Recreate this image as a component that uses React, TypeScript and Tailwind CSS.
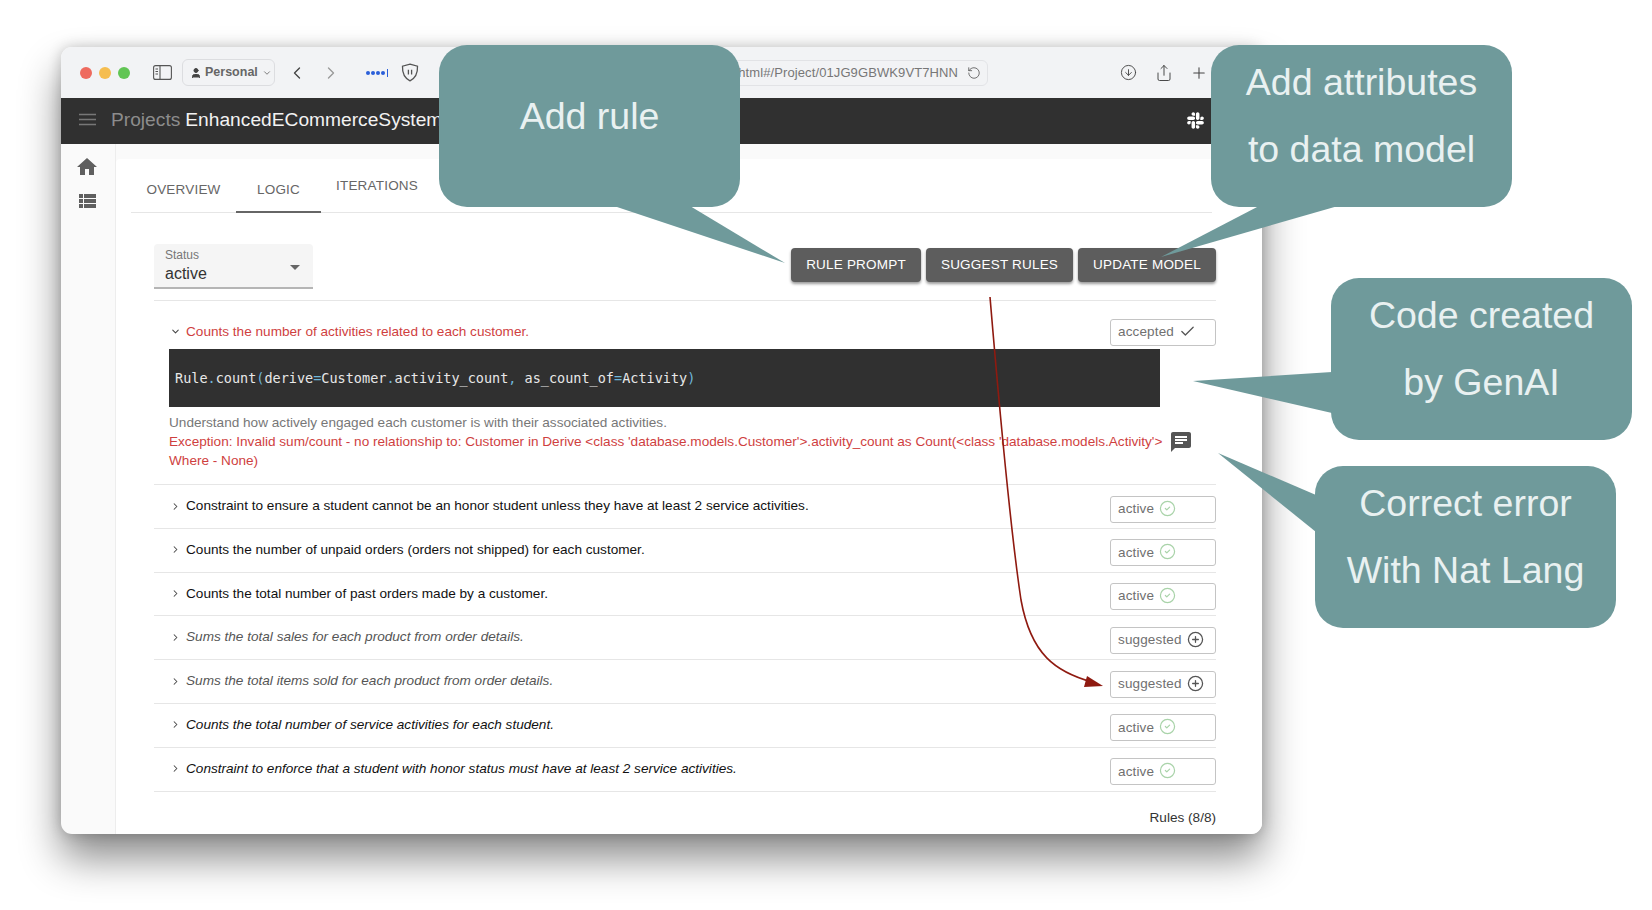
import React from 'react';
import { ChevronDown, ChevronRight, ChevronLeft, Check, CircleCheck, CirclePlus, CircleArrowDown, Share, Plus, RotateCw, User } from 'lucide-react';
import { FaSlack } from 'react-icons/fa';

const rules = [
  { text: 'Constraint to ensure a student cannot be an honor student unless they have at least 2 service activities.', status: 'active', style: 'text-[#111]' },
  { text: 'Counts the number of unpaid orders (orders not shipped) for each customer.', status: 'active', style: 'text-[#111]' },
  { text: 'Counts the total number of past orders made by a customer.', status: 'active', style: 'text-[#111]' },
  { text: 'Sums the total sales for each product from order details.', status: 'suggested', style: 'italic text-[#555]' },
  { text: 'Sums the total items sold for each product from order details.', status: 'suggested', style: 'italic text-[#555]' },
  { text: 'Counts the total number of service activities for each student.', status: 'active', style: 'italic text-[#111]' },
  { text: 'Constraint to enforce that a student with honor status must have at least 2 service activities.', status: 'active', style: 'italic text-[#111]' },
];

const StatusChip = ({ status }: { status: string }) => (
  <div className="flex h-[27px] w-[106px] shrink-0 items-center gap-[5px] rounded-[3px] border border-[#c4c4c4] bg-white pl-[7px] text-[13.5px] text-[#707070]">
    <span className="tracking-[0.15px]">{status}</span>
    {status === 'active' && <CircleCheck size={17} strokeWidth={1.7} className="mb-[2px] text-[#a9d3a9]" />}
    {status === 'suggested' && <CirclePlus size={17} strokeWidth={1.8} className="mb-[2px] text-[#555]" />}
    {status === 'accepted' && <Check size={17} strokeWidth={1.8} className="mb-[2px] text-[#555]" />}
  </div>
);

const RuleRow = ({ text, status, style }: { text: string; status: string; style: string }) => (
  <div className="flex h-[43.8px] items-start justify-between border-b border-[#e6e6e6] pt-[10.5px]">
    <div className="flex items-center pl-[16px] pt-[0.5px]">
      <ChevronRight size={11} strokeWidth={2.2} className="mr-[5px] mt-[1px] text-[#444]" />
      <span className={`text-[13.6px] leading-[19px] ${style}`}>{text}</span>
    </div>
    <StatusChip status={status} />
  </div>
);

const Callout = ({ className, children }: { className: string; children: React.ReactNode }) => (
  <div className={`absolute h-[162px] w-[301px] rounded-[28px] bg-[#6f9a9b] text-center text-[37.5px] leading-[67px] text-[#e9f1f1] ${className}`}>
    {children}
  </div>
);

const ActionButton = ({ label, width }: { label: string; width: string }) => (
  <button className={`h-[34px] rounded-[4px] bg-[#5d5d5d] text-[13.5px] tracking-[0.2px] text-white shadow-[0_2px_3px_rgba(0,0,0,0.4)] ${width}`}>
    {label}
  </button>
);

export default function App() {
  return (
    <div className="relative h-[910px] w-[1652px] overflow-hidden bg-white pl-[61px] pt-[47px] font-['Liberation_Sans',sans-serif]">
      {/* browser window */}
      <div className="h-[787px] w-[1201px] overflow-hidden rounded-[11px] bg-[#fafafa] shadow-[0_24px_40px_rgba(0,0,0,0.46),0_0_14px_rgba(0,0,0,0.2)]">
        {/* safari toolbar */}
        <div className="flex h-[51px] items-center bg-[#f2f3f5] pl-[19px]">
          <span className="h-[12px] w-[12px] rounded-full bg-[#ee6a5e]" />
          <span className="ml-[7px] h-[12px] w-[12px] rounded-full bg-[#f5bd4f]" />
          <span className="ml-[7px] h-[12px] w-[12px] rounded-full bg-[#61c554]" />
          <svg width="19" height="15" viewBox="0 0 19 15" className="ml-[23px]" fill="none" stroke="#555" strokeWidth="1.1">
            <rect x="0.6" y="0.6" width="17.8" height="13.8" rx="2" />
            <path d="M7 1v13M2.5 4h2.5M2.5 6.5h2.5M2.5 9h2.5" />
          </svg>
          <div className="ml-[10px] flex h-[27px] w-[93px] items-center rounded-[6px] border border-[#dcdde0] pl-[7px] text-[12.5px] font-bold text-[#666]">
            <User size={12} fill="#444" strokeWidth={2} className="mr-[3px] text-[#444]" />
            Personal
            <ChevronDown size={10} className="ml-[4px]" />
          </div>
          <ChevronLeft size={20} strokeWidth={1.6} className="ml-[12px] text-[#444]" />
          <ChevronRight size={20} strokeWidth={1.6} className="ml-[14px] text-[#999]" />
          <div className="ml-[25px] flex items-center gap-[1px]">
            <span className="h-[4px] w-[4px] rounded-full bg-[#2b5fd9]" />
            <span className="h-[4px] w-[4px] rounded-full bg-[#2b5fd9]" />
            <span className="h-[4px] w-[4px] rounded-full bg-[#2b5fd9]" />
            <span className="h-[4px] w-[4px] rounded-full bg-[#2b5fd9]" />
            <span className="ml-[1px] h-[8px] w-[1px] bg-[#2b5fd9]" />
          </div>
          <svg width="18" height="19" viewBox="0 0 18 19" className="ml-[13px]" fill="none" stroke="#555" strokeWidth="1.3">
            <path d="M9 1.2 16.5 3.2C16.8 9.5 14.5 15 9 17.8 3.5 15 1.2 9.5 1.5 3.2Z" />
            <path d="M7.4 6.8v4.6M10.6 6.8v4.6" />
          </svg>
          <div className="ml-[28px] flex h-[26px] w-[541px] items-center justify-end rounded-[6px] border border-[#e2e3e6] pr-[6px] text-[13px] text-[#777]">
            <span className="tracking-[0.1px]">html#/Project/01JG9GBWK9VT7HNN</span>
            <RotateCw size={14} strokeWidth={1.4} className="ml-[9px] -scale-x-100 text-[#555]" />
          </div>
          <CircleArrowDown size={17} strokeWidth={1.3} className="ml-[132px] text-[#444]" />
          <Share size={18} strokeWidth={1.3} className="ml-[18px] text-[#444]" />
          <Plus size={18} strokeWidth={1.4} className="ml-[17px] text-[#444]" />
        </div>

        {/* app bar */}
        <div className="flex h-[46px] items-center justify-between bg-[#303030] pb-[2px] pl-[18px] pr-[57px]">
          <div className="flex items-center">
            <svg width="17" height="13" viewBox="0 0 17 13" fill="none" stroke="#777" strokeWidth="1.5">
              <path d="M0 1.5h17M0 6.5h17M0 11.5h17" />
            </svg>
            <span className="ml-[15px] text-[19.2px] text-[#8c8c8c]">Projects</span>
            <span className="ml-[5px] text-[19.2px] text-[#f2f2f2]">EnhancedECommerceSystem</span>
          </div>
          <FaSlack size={19} className="text-white" />
        </div>

        <div className="flex h-[690px]">
          {/* side rail */}
          <div className="flex w-[55px] shrink-0 flex-col items-center gap-[10px] border-r border-[#ededed] pt-[11px] pr-[3px]">
            <svg width="24" height="24" viewBox="0 0 24 24" fill="#5f5f5f">
              <path d="M10 20v-6h4v6h5v-8h3L12 3 2 12h3v8z" />
            </svg>
            <svg width="24" height="24" viewBox="0 0 24 24" fill="#5f5f5f">
              <path d="M4 14h4v-4H4v4zm0 5h4v-4H4v4zM4 9h4V5H4v4zm5 5h12v-4H9v4zm0 5h12v-4H9v4zM9 5v4h12V5H9z" />
            </svg>
          </div>

          <div className="flex-1 pt-[15px]">
            <div className="h-[675px] w-full rounded-tl-[4px] bg-white pl-[15px]">
              {/* tabs */}
              <div className="flex h-[54px] w-[1081px] border-b border-[#e6e6e6] text-[13.5px] tracking-[0.2px] text-[#666]">
                <div className="flex w-[105px] justify-center pt-[21px]">OVERVIEW</div>
                <div className="flex h-[54px] w-[85px] justify-center border-b-2 border-[#666] pt-[21px]">LOGIC</div>
                <div className="ml-[15px] pt-[17px]">ITERATIONS</div>
              </div>

              <div className="ml-[23px] w-[1062px]">
                {/* status + actions */}
                <div className="flex h-[88px] justify-between border-b border-[#e6e6e6] pt-[31px]">
                  <div className="relative h-[45px] w-[159px] rounded-t-[4px] border-b-2 border-[#b5b5b5] bg-[#f5f5f5] pl-[11px] pt-[4px]">
                    <div className="text-[12px] leading-[14px] text-[#777]">Status</div>
                    <div className="mt-[1px] text-[16px] leading-[22px] text-[#333]">active</div>
                    <span className="absolute right-[13px] top-[21px] h-0 w-0 border-x-[5px] border-t-[5px] border-x-transparent border-t-[#666]" />
                  </div>
                  <div className="mt-[4px] flex gap-[5px]">
                    <ActionButton label="RULE PROMPT" width="w-[130px]" />
                    <ActionButton label="SUGGEST RULES" width="w-[147px]" />
                    <ActionButton label="UPDATE MODEL" width="w-[138px]" />
                  </div>
                </div>

                {/* expanded rule */}
                <div className="h-[184px] border-b border-[#e6e6e6] pt-[18px]">
                  <div className="flex items-start justify-between">
                    <div className="flex items-center pl-[16px] pt-[3px]">
                      <ChevronDown size={11} strokeWidth={2.2} className="mr-[5px] text-[#444]" />
                      <span className="text-[13.6px] leading-[19px] text-[#cf3f3f]">Counts the number of activities related to each customer.</span>
                    </div>
                    <StatusChip status="accepted" />
                  </div>
                  <div className="ml-[15px] mt-[3px] flex h-[58px] w-[991px] items-center bg-[#303030] pl-[6px] font-['DejaVu_Sans_Mono',monospace] text-[13.5px] text-[#e8e8e8]">
                    <span>Rule<span className="text-[#6fb6d9]">.</span>count<span className="text-[#6fb6d9]">(</span>derive<span className="text-[#6fb6d9]">=</span>Customer<span className="text-[#6fb6d9]">.</span>activity_count<span className="text-[#6fb6d9]">,</span> as_count_of<span className="text-[#6fb6d9]">=</span>Activity<span className="text-[#6fb6d9]">)</span></span>
                  </div>
                  <div className="ml-[15px] mt-[6px] flex items-start">
                    <div className="w-[995px] text-[13.6px] leading-[19px]">
                      <div className="text-[#777]">Understand how actively engaged each customer is with their associated activities.</div>
                      <div className="text-[#cf3f3f]">
                        Exception: Invalid sum/count - no relationship to: Customer in Derive &lt;class 'database.models.Customer'&gt;.activity_count as Count(&lt;class 'database.models.Activity'&gt; Where - None)
                      </div>
                    </div>
                    <svg width="24" height="24" viewBox="0 0 24 24" fill="#555" className="ml-[5px] mt-[17px]">
                      <path d="M20 2H4c-1.1 0-1.99.9-1.99 2L2 22l4-4h14c1.1 0 2-.9 2-2V4c0-1.1-.9-2-2-2zM6 9h12v2H6V9zm8 5H6v-2h8v2zm4-6H6V6h12v2z" />
                    </svg>
                  </div>
                </div>

                {rules.map((rule) => (
                  <RuleRow key={rule.text} {...rule} />
                ))}

                <div className="pt-[18px] text-right text-[13.6px] leading-[15px] text-[#333]">Rules (8/8)</div>
              </div>
            </div>
          </div>
        </div>
      </div>

      {/* annotation tails and the red arrow */}
      <svg width="1652" height="910" viewBox="0 0 1652 910" className="pointer-events-none absolute left-0 top-0">
        <polygon fill="#6f9a9b" points="614,206 690,206 785,263" />
        <polygon fill="#6f9a9b" points="1259,206 1338,206 1161,257" />
        <polygon fill="#6f9a9b" points="1332,372 1332,413 1193,381" />
        <polygon fill="#6f9a9b" points="1316,495 1316,532 1218,453" />
        <path d="M990 297 C 1002 440 1012 540 1021 600 C 1031 655 1056 672 1092 682" fill="none" stroke="#8f1a10" strokeWidth="1.6" />
        <polygon fill="#8f1a10" points="1087,676 1084,687 1103,686" />
      </svg>

      <Callout className="left-[439px] top-[45px] pt-[38px]">Add rule</Callout>
      <Callout className="left-[1211px] top-[45px] pt-[4px]">Add attributes<br />to data model</Callout>
      <Callout className="left-[1331px] top-[278px] pt-[4px]">Code created<br />by GenAI</Callout>
      <Callout className="left-[1315px] top-[466px] pt-[4px]">Correct error<br />With Nat Lang</Callout>
    </div>
  );
}
